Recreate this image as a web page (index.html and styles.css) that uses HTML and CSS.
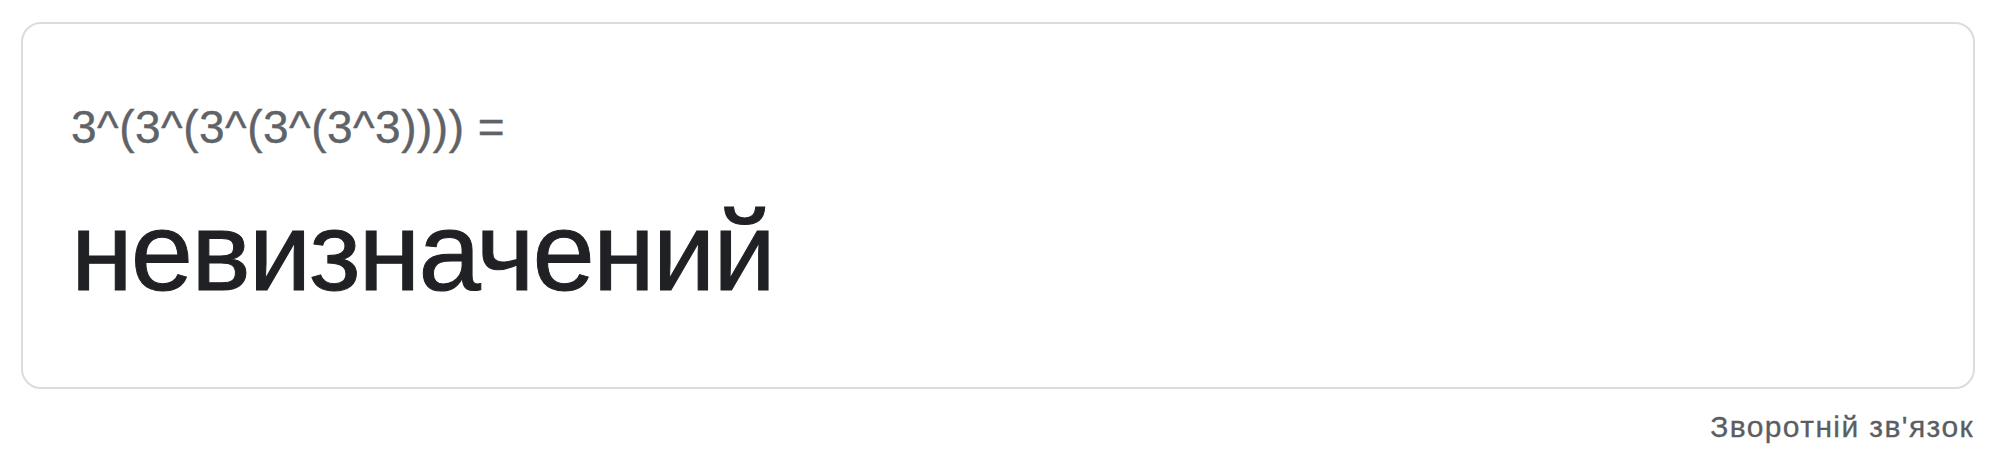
FILE: index.html
```html
<!DOCTYPE html>
<html lang="uk">
<head>
<meta charset="utf-8">
<link rel="stylesheet" href="styles.css">
</head>
<body>
<div class="page">
  <div class="card">
    <div class="expr">3^(3^(3^(3^(3^3)))) =</div>
    <div class="result">невизначений</div>
  </div>
  <div class="footer"><span class="feedback">Зворотній зв'язок</span></div>
</div>
</body>
</html>
```
FILE: styles.css
```css
html, body {
  margin: 0;
  padding: 0;
  background: #ffffff;
}
.page {
  padding: 22px 21px 0 21px;
  font-family: "Liberation Sans", Arial, sans-serif;
}
.card {
  border: 2px solid #dadce0;
  border-radius: 20px;
  padding: 76px 48px 68px 48px;
  display: flex;
  flex-direction: column;
  gap: 31px;
}
.expr {
  font-size: 46px;
  line-height: 54px;
  color: #5f6368;
  letter-spacing: 0.5px;
  -webkit-text-stroke: 0.4px #5f6368;
}
.result {
  font-size: 112px;
  line-height: 134px;
  color: #202124;
  letter-spacing: -2px;
  -webkit-text-stroke: 1px #202124;
}
.footer {
  display: flex;
  justify-content: flex-end;
  margin-top: 20px;
}
.feedback {
  font-size: 30px;
  line-height: 36px;
  color: #5a5e63;
  letter-spacing: 1.4px;
  margin-right: 1px;
  -webkit-text-stroke: 0.3px #5a5e63;
}
```
